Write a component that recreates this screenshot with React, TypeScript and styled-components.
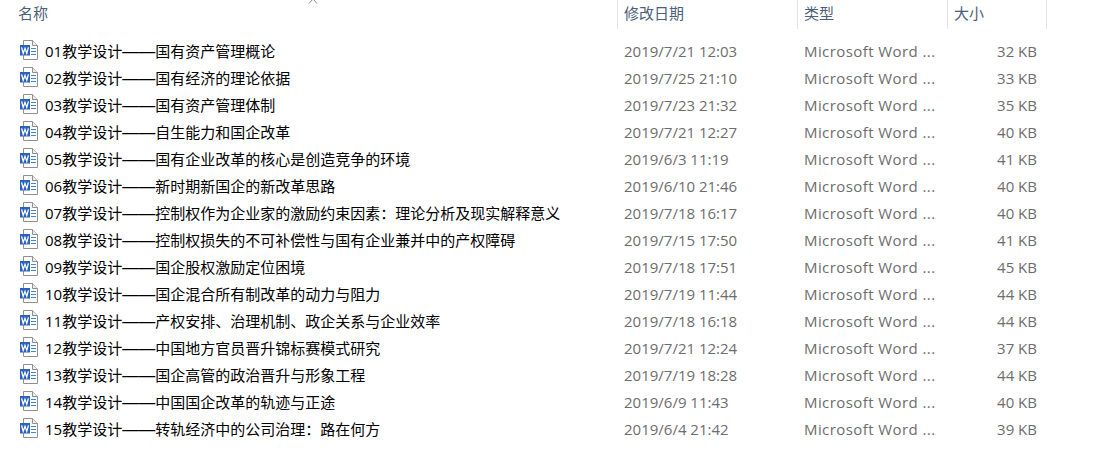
import React from "react";
import styled, { createGlobalStyle } from "styled-components";

const Global = createGlobalStyle`
  html, body { margin: 0; padding: 0; background: #fff; }
  body { width: 1102px; height: 452px; overflow: hidden; font-family: "Open Sans", "Noto Sans CJK SC", sans-serif; }
`;

const Page = styled.div`
  position: relative;
  width: 1102px;
  height: 452px;
  background: #fff;
  overflow: hidden;
`;

const Columns = "617px 180px 150px 100px";

const Header = styled.div`
  display: grid;
  grid-template-columns: ${Columns};
  height: 29px;
  margin-bottom: 8px;
`;

const HeaderCell = styled.div<{ $first?: boolean }>`
  box-sizing: border-box;
  padding-left: ${(p) => (p.$first ? "18px" : "6px")};
  border-left: ${(p) => (p.$first ? "none" : "1px solid #e5e5e5")};
  font-size: 15px;
  line-height: 27px;
  color: #4c607a;
  &:last-child { border-right: 1px solid #e5e5e5; }
`;

const Caret = styled.svg`
  position: absolute;
  left: 308px;
  top: -2px;
`;

const Row = styled.div`
  display: grid;
  grid-template-columns: ${Columns};
  height: 27px;
  align-items: center;
  font-size: 15px;
`;

const NameCell = styled.div`
  display: flex;
  align-items: center;
  gap: 7px;
  padding-left: 20px;
  color: #000;
  white-space: nowrap;
`;

const Dash = styled.span`
  font-family: "Liberation Sans", sans-serif;
  font-size: 16.5px;
`;

const InfoCell = styled.div`
  padding-left: 7px;
  color: #6d6d6d;
  white-space: nowrap;
`;

const TypeCell = styled(InfoCell)`
  letter-spacing: 0.42px;
`;

const SizeCell = styled(InfoCell)`
  padding: 0 10px 0 0;
  text-align: right;
`;

const IconSvg = styled.svg`
  flex: none;
  margin-bottom: 2px;
`;

const WordIcon = () => (
  <IconSvg width="18" height="20" viewBox="0 0 18 20">
    <path d="M3.5 .5H12.5L17.5 5.5V19.5H3.5Z" fill="#fff" stroke="#8f8f8f" />
    <path d="M12.5 .5V5.5H17.5" fill="#ececec" stroke="#8f8f8f" />
    <path d="M11 8.5H16M11 11.5H16M11 14.5H16" stroke="#3f86dc" strokeWidth="1.2" />
    <rect x="0" y="5" width="10" height="10.5" fill="#2b62bd" />
    <path d="M1.6 7.3L3.2 13.3L5 8.3L6.8 13.3L8.4 7.3" fill="none" stroke="#fff" strokeWidth="1.3" />
  </IconSvg>
);

const files: [string, string, string, string][] = [
  ["01教学设计", "国有资产管理概论", "2019/7/21 12:03", "32 KB"],
  ["02教学设计", "国有经济的理论依据", "2019/7/25 21:10", "33 KB"],
  ["03教学设计", "国有资产管理体制", "2019/7/23 21:32", "35 KB"],
  ["04教学设计", "自生能力和国企改革", "2019/7/21 12:27", "40 KB"],
  ["05教学设计", "国有企业改革的核心是创造竞争的环境", "2019/6/3 11:19", "41 KB"],
  ["06教学设计", "新时期新国企的新改革思路", "2019/6/10 21:46", "40 KB"],
  ["07教学设计", "控制权作为企业家的激励约束因素：理论分析及现实解释意义", "2019/7/18 16:17", "40 KB"],
  ["08教学设计", "控制权损失的不可补偿性与国有企业兼并中的产权障碍", "2019/7/15 17:50", "41 KB"],
  ["09教学设计", "国企股权激励定位困境", "2019/7/18 17:51", "45 KB"],
  ["10教学设计", "国企混合所有制改革的动力与阻力", "2019/7/19 11:44", "44 KB"],
  ["11教学设计", "产权安排、治理机制、政企关系与企业效率", "2019/7/18 16:18", "44 KB"],
  ["12教学设计", "中国地方官员晋升锦标赛模式研究", "2019/7/21 12:24", "37 KB"],
  ["13教学设计", "国企高管的政治晋升与形象工程", "2019/7/19 18:28", "44 KB"],
  ["14教学设计", "中国国企改革的轨迹与正途", "2019/6/9 11:43", "40 KB"],
  ["15教学设计", "转轨经济中的公司治理：路在何方", "2019/6/4 21:42", "39 KB"],
];

export default function App() {
  return (
    <Page>
      <Global />
      <Caret width="10" height="6" viewBox="0 0 10 6">
        <path d="M1 5.5L5 1L9 5.5" fill="none" stroke="#8a8a8a" />
      </Caret>
      <Header>
        <HeaderCell $first>名称</HeaderCell>
        <HeaderCell>修改日期</HeaderCell>
        <HeaderCell>类型</HeaderCell>
        <HeaderCell>大小</HeaderCell>
      </Header>
      {files.map(([head, tail, date, size]) => (
        <Row key={head}>
          <NameCell>
            <WordIcon />
            <span>
              {head}
              <Dash>——</Dash>
              {tail}
            </span>
          </NameCell>
          <InfoCell>{date}</InfoCell>
          <TypeCell>Microsoft Word ...</TypeCell>
          <SizeCell>{size}</SizeCell>
        </Row>
      ))}
    </Page>
  );
}
